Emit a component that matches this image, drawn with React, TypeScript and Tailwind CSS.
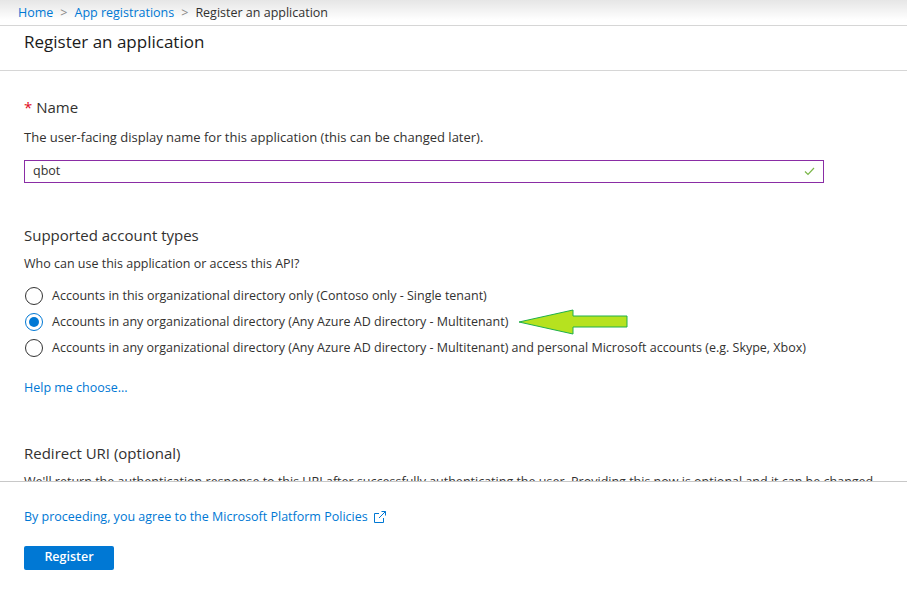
import React from 'react';

const radios = [
    { id: 'single', label: 'Accounts in this organizational directory only (Contoso only - Single tenant)', checked: false },
    { id: 'multi', label: 'Accounts in any organizational directory (Any Azure AD directory - Multitenant)', checked: true },
    {
        id: 'multi-personal',
        label: 'Accounts in any organizational directory (Any Azure AD directory - Multitenant) and personal Microsoft accounts (e.g. Skype, Xbox)',
        checked: false,
    },
];

const Radio: React.FC<{ checked: boolean }> = ({ checked }) => (
    <span
        className={
            checked
                ? 'flex h-[18px] w-[18px] shrink-0 items-center justify-center rounded-full border border-[#0078d4] bg-white'
                : 'flex h-[18px] w-[18px] shrink-0 items-center justify-center rounded-full border border-[#333] bg-white'
        }
    >
        {checked && <span className="h-[10px] w-[10px] rounded-full bg-[#0078d4]" />}
    </span>
);

const Arrow = () => (
    <svg width="112" height="28" viewBox="0 0 112 28" className="shrink-0">
        <polygon
            points="2,14 56,2 56,8 110,8 110,19 56,19 56,26"
            fill="#b6e21f"
            stroke="#1fb04a"
            strokeWidth="1"
        />
    </svg>
);

export default function App() {
    return (
        <div className="flex h-[590px] w-[907px] flex-col overflow-hidden bg-white font-['Open_Sans',sans-serif] text-[#323130]">
            {/* Breadcrumb */}
            <div className="flex h-[26px] items-center gap-[7px] border-b border-[#d6d6d6] bg-gradient-to-b from-[#e6e6e6] to-white to-[80%] px-[18px] pt-[1px] text-[12.5px]">
                <span className="text-[#0078d4]">Home</span>
                <span className="text-[#8a8886]">&gt;</span>
                <span className="text-[#0078d4]">App registrations</span>
                <span className="text-[#8a8886]">&gt;</span>
                <span className="text-[#323130]">Register an application</span>
            </div>

            {/* Title */}
            <div className="h-[45px] border-b border-[#d6d6d6] px-6 pt-[3px]">
                <h1 className="text-[17px] text-[#1b1b1b]">Register an application</h1>
            </div>

            {/* Scrolling content */}
            <div className="flex-1 overflow-hidden px-6 pt-[26px]">
                <div className="text-[15px] leading-5">
                    <span className="text-[#e00b1c]">* </span>Name
                </div>
                <p className="mt-[11px] text-[13px]">The user-facing display name for this application (this can be changed later).</p>
                <div className="mt-[12px] flex h-[23px] w-[800px] items-center justify-between border border-[#8a2da5] px-2 text-[12.5px]">
                    <span>qbot</span>
                    <svg width="11" height="9" viewBox="0 0 11 9">
                        <path d="M1 4.5 L4 7.5 L10 1" fill="none" stroke="#7ab648" strokeWidth="1.2" />
                    </svg>
                </div>

                <div className="mt-[42px] text-[15px] leading-5">Supported account types</div>
                <p className="mt-[10px] text-[12.5px]">Who can use this application or access this API?</p>
                <div className="mt-[14px] flex flex-col gap-[8px]">
                    {radios.map(r => (
                        <div key={r.id} className="flex h-[18px] items-center gap-[9px] pl-[1px] text-[12.5px]">
                            <Radio checked={r.checked} />
                            <span>{r.label}</span>
                            {r.checked && <Arrow />}
                        </div>
                    ))}
                </div>

                <div className="mt-[22px] text-[12.5px] text-[#0078d4]">Help me choose...</div>

                <div className="mt-[45px] text-[15px] leading-5">Redirect URI (optional)</div>
                <p className="mt-[10px] text-[12.5px]">
                    We'll return the authentication response to this URI after successfully authenticating the user. Providing this now is optional and it can be
                    changed later, but a value is required for most authentication scenarios.
                </p>
            </div>

            {/* Footer */}
            <div className="h-[109px] shrink-0 border-t border-[#c8c8c8] px-6 pt-[26px]">
                <div className="flex items-center gap-[5px] text-[12.5px] text-[#0078d4]">
                    <span>By proceeding, you agree to the Microsoft Platform Policies</span>
                    <svg width="14" height="14" viewBox="0 0 14 14" fill="none" stroke="#0078d4" strokeWidth="1">
                        <path d="M8.5 1.5 H12.5 V5.5" />
                        <path d="M12.5 1.5 L6 8" />
                        <path d="M10.5 8 V12.5 H1.5 V3.5 H6" />
                    </svg>
                </div>
                <button className="mt-[19px] h-[24px] w-[90px] rounded-[2px] bg-[#0078d4] text-[12.5px] font-semibold text-white">Register</button>
            </div>
        </div>
    );
}
